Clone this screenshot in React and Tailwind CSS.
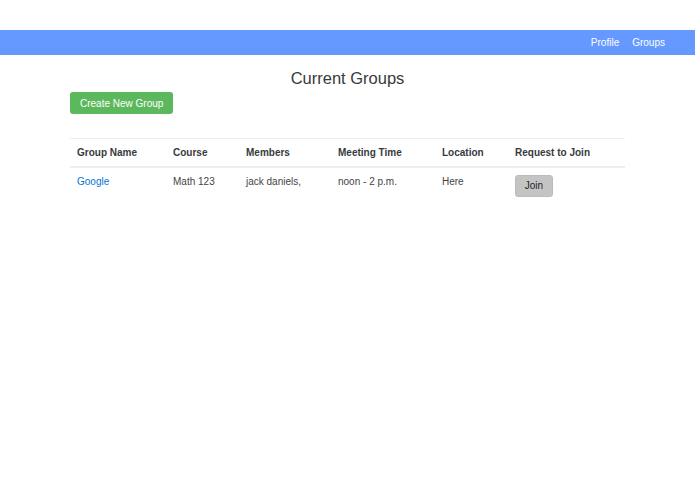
const rows = [
  { name: "Google", course: "Math 123", members: "jack daniels,", time: "noon - 2 p.m.", location: "Here" },
];

const App = () => {
  return (
    <div className="min-h-screen bg-white pt-[30px] text-[#373a3c]" style={{ fontFamily: '"Liberation Sans", Arial, sans-serif' }}>
      {/* Navbar */}
      <nav className="h-[25px] bg-[#6699ff] flex items-center justify-end pr-[30px] gap-[13px] text-[10px] text-white">
        <a href="#">Profile</a>
        <a href="#">Groups</a>
      </nav>

      <div className="w-[555px] mx-auto">
        <h2 className="text-center text-[16.5px] leading-[20px] mt-[13px]">Current Groups</h2>
        <button className="mt-[4px] h-[22px] px-[10px] bg-[#5cb85c] text-white text-[10px] rounded-[3px]">
          Create New Group
        </button>

        <table className="mt-[24px] w-full text-[10px] text-left border-collapse">
          <thead>
            <tr className="border-t border-[#eceeef] border-b-[2px]">
              <th className="w-[96px] h-[28px] pl-[7px] font-bold">Group Name</th>
              <th className="w-[73px] pl-[7px] font-bold">Course</th>
              <th className="w-[92px] pl-[7px] font-bold">Members</th>
              <th className="w-[104px] pl-[7px] font-bold">Meeting Time</th>
              <th className="w-[73px] pl-[7px] font-bold">Location</th>
              <th className="pl-[7px] font-bold">Request to Join</th>
            </tr>
          </thead>
          <tbody>
            {rows.map((r) => (
              <tr key={r.name} className="align-top text-[#444]">
                <td className="pl-[7px] pt-[6px]"><a href="#" className="text-[#0275d8]">{r.name}</a></td>
                <td className="pl-[7px] pt-[6px]">{r.course}</td>
                <td className="pl-[7px] pt-[6px]">{r.members}</td>
                <td className="pl-[7px] pt-[6px]">{r.time}</td>
                <td className="pl-[7px] pt-[6px]">{r.location}</td>
                <td className="pl-[7px] pt-[7px] pb-[4px]">
                  <button className="h-[22px] w-[38px] bg-[#c4c4c4] border border-[#bbb] rounded-[3px] text-[#222]">Join</button>
                </td>
              </tr>
            ))}
          </tbody>
        </table>
      </div>
    </div>
  );
};

export default App;
